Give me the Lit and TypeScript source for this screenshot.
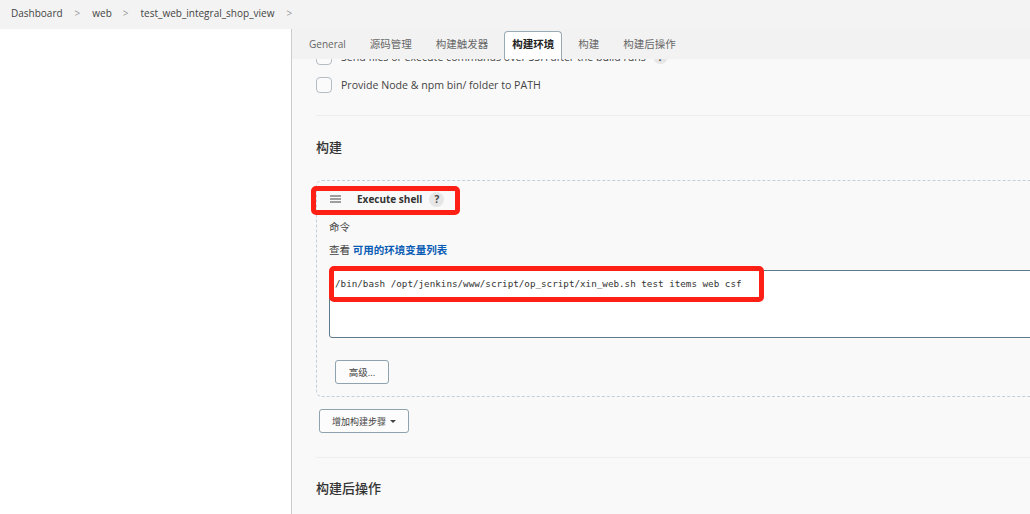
import { LitElement, html, css } from "lit";
import { customElement } from "lit/decorators.js";

@customElement("app-root")
export class AppRoot extends LitElement {
  static styles = css`
    :host {
      display: block;
      width: 1030px;
      height: 514px;
      overflow: hidden;
      position: relative;
      font-family: "Open Sans", "Noto Sans CJK SC", sans-serif;
      color: #333;
      background: #fff;
    }
    .crumbs {
      height: 29px;
      box-sizing: border-box;
      padding: 0 0 4px 11px;
      background: #f3f3f3;
      display: flex;
      align-items: center;
      font-size: 10px;
      color: #444;
    }
    .sep { color: #999; margin: 0 12px 0 12px; font-size: 10px; }
    .sep.b { margin: 0 12px 0 11px; }
    .body { display: flex; height: 485px; }
    .side { width: 291px; background: #fff; border-right: 1px solid #ccc; flex: none; }
    .main { flex: 1; min-width: 0; background: #f9f9f9; position: relative; overflow: hidden; }
    .tabs {
      position: absolute;
      inset: 0 0 auto 0;
      height: 30px;
      background: #f2f2f2;
      display: flex;
      align-items: flex-end;
      padding-left: 17px;
      z-index: 2;
      font-size: 10.5px;
      color: #666;
      box-sizing: border-box;
    }
    .tab { height: 28px; line-height: 26px; margin-right: 24px; white-space: nowrap; }
    .tab.latin { font-size: 10px; }
    .tab.active {
      height: 28px;
      box-sizing: border-box;
      margin: 0 16px 0 -8px;
      padding: 0 7px;
      background: #fff;
      border: 1px solid #9aaab5;
      border-bottom: none;
      border-radius: 4px 4px 0 0;
      color: #222;
      font-weight: 600;
      line-height: 24px;
    }
    .form { padding: 19px 0 0 24px; width: 760px; box-sizing: content-box; }
    .check { display: flex; align-items: center; height: 17px; font-size: 10.6px; color: #444; white-space: nowrap; }
    .check + .check { margin-top: 11px; }
    .box {
      width: 14px;
      height: 14px;
      border: 1px solid #b4bdc4;
      border-radius: 4px;
      background: #fbfbfb;
      margin-right: 9px;
      flex: none;
    }
    .q {
      width: 15px;
      height: 15px;
      border-radius: 50%;
      background: #e6e6e6;
      color: #444;
      font-size: 10px;
      font-weight: 700;
      display: inline-flex;
      align-items: center;
      justify-content: center;
      margin-left: 7px;
      flex: none;
    }
    hr { border: none; border-top: 1px solid #eeeeee; margin: 0; width: 760px; }
    .hr1 { margin-top: 22px; }
    h2 { font-size: 13px; font-weight: 500; margin: 0; color: #333; line-height: 18px; }
    .h1 { margin-top: 22px; }
    .step {
      margin: 24px 0 0 0;
      width: 900px;
      height: 217px;
      box-sizing: border-box;
      border: 1px dashed #c3cfd8;
      border-radius: 6px;
      padding: 0 0 0 12px;
    }
    .head { display: flex; align-items: center; height: 36px; font-size: 10px; font-weight: 700; color: #333; }
    .head svg { margin-right: 16px; margin-left: 1px; }
    .label { font-size: 10.5px; color: #444; line-height: 14px; margin-top: 3px; }
    .help { font-size: 10.5px; color: #444; line-height: 14px; margin-top: 9px; }
    .help a { color: #0b5cb5; font-weight: 600; text-decoration: none; }
    .ta {
      margin-top: 13px;
      height: 68px;
      box-sizing: border-box;
      background: #fff;
      border: 1px solid #5f7a8a;
      border-radius: 3px;
      padding: 6px 5px;
      font-family: "DejaVu Sans Mono", monospace;
      font-size: 9.25px;
      line-height: 14px;
      color: #333;
      white-space: pre;
    }
    .btn {
      box-sizing: border-box;
      border: 1px solid #8fa3ae;
      border-radius: 3px;
      background: #fcfcfc;
      font-size: 9.5px;
      color: #444;
      height: 24px;
      display: flex;
      align-items: center;
      justify-content: center;
    }
    .adv { width: 54px; margin: 22px 0 0 6px; }
    .add { width: 90px; margin: 12px 0 0 3px; gap: 4px; font-size: 9px; }
    .caret { width: 0; height: 0; border: 3px solid transparent; border-top: 3px solid #444; margin-top: 3px; }
    .hr2 { margin-top: 24px; }
    .h2 { margin-top: 21px; }
    .mark {
      position: absolute;
      box-sizing: border-box;
      border: 5px solid #ff2015;
      border-radius: 5px;
      z-index: 3;
    }
    .m1 { left: 311px; top: 186px; width: 149px; height: 29px; }
    .m2 { left: 329px; top: 266px; width: 435px; height: 36px; }
  `;

  render() {
    return html`
      <div class="crumbs">
        <span>Dashboard</span><span class="sep">&gt;</span>
        <span>web</span><span class="sep b">&gt;</span>
        <span>test_web_integral_shop_view</span><span class="sep">&gt;</span>
      </div>
      <div class="body">
        <div class="side"></div>
        <div class="main">
          <div class="tabs">
            <span class="tab latin">General</span>
            <span class="tab">源码管理</span>
            <span class="tab">构建触发器</span>
            <span class="tab active">构建环境</span>
            <span class="tab">构建</span>
            <span class="tab">构建后操作</span>
          </div>
          <div class="form">
            <div class="check"><span class="box"></span>Send files or execute commands over SSH after the build runs<span class="q">?</span></div>
            <div class="check"><span class="box"></span>Provide Node &amp; npm bin/ folder to PATH</div>
            <hr class="hr1" />
            <h2 class="h1">构建</h2>
            <div class="step">
              <div class="head">
                <svg width="11" height="8" viewBox="0 0 11 8"><path d="M0 1h11M0 4h11M0 7h11" stroke="#444" stroke-width="1" fill="none"/></svg>
                Execute shell<span class="q">?</span>
              </div>
              <div class="label">命令</div>
              <div class="help">查看 <a>可用的环境变量列表</a></div>
              <div class="ta">/bin/bash /opt/jenkins/www/script/op_script/xin_web.sh test items web csf</div>
              <div class="btn adv">高级...</div>
            </div>
            <div class="btn add">增加构建步骤 <span class="caret"></span></div>
            <hr class="hr2" />
            <h2 class="h2">构建后操作</h2>
          </div>
        </div>
      </div>
      <div class="mark m1"></div>
      <div class="mark m2"></div>
    `;
  }
}
